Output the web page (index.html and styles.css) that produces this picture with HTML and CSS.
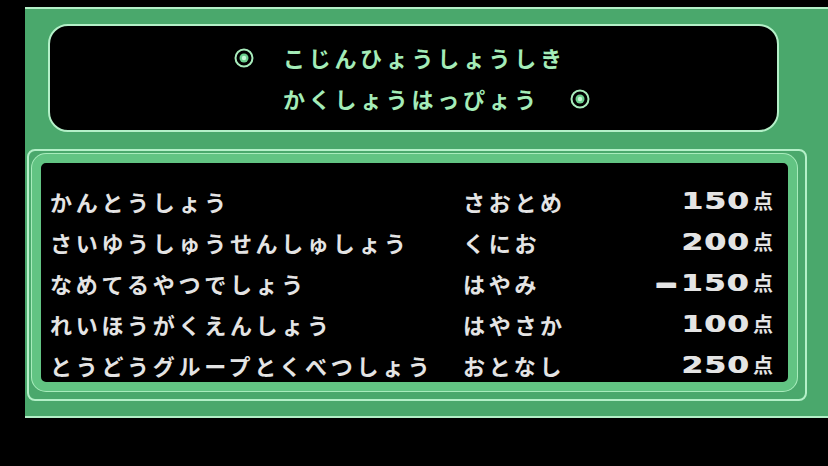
FILE: index.html
```html
<!DOCTYPE html>
<html lang="ja">
<head>
<meta charset="utf-8">
<title>こじんひょうしょうしき</title>
<link rel="stylesheet" href="styles.css">
</head>
<body>
<div class="screen">
  <div class="banner">
    <div class="banner-line first">
      <svg class="ring ring-left" viewBox="0 0 20 20" width="20" height="20"><circle cx="10" cy="10" r="8.5" fill="none" stroke="#a8ecbc" stroke-width="2"/><circle cx="10" cy="10" r="4.5" fill="#6cd08e"/><circle cx="10" cy="10" r="2.2" fill="#c8f8d8"/></svg>
      <span>こじんひょうしょうしき</span>
    </div>
    <div class="banner-line second">
      <span>かくしょうはっぴょう</span>
      <svg class="ring ring-right" viewBox="0 0 20 20" width="20" height="20"><circle cx="10" cy="10" r="8.5" fill="none" stroke="#a8ecbc" stroke-width="2"/><circle cx="10" cy="10" r="4.5" fill="#6cd08e"/><circle cx="10" cy="10" r="2.2" fill="#c8f8d8"/></svg>
    </div>
  </div>
  <div class="frame">
    <div class="board">
      <div class="row"><span class="award">かんとうしょう</span><span class="who">さおとめ</span><span class="pts"><span class="num">150</span><span class="ten">点</span></span></div>
      <div class="row"><span class="award">さいゆうしゅうせんしゅしょう</span><span class="who">くにお</span><span class="pts"><span class="num">200</span><span class="ten">点</span></span></div>
      <div class="row"><span class="award">なめてるやつでしょう</span><span class="who">はやみ</span><span class="pts"><span class="num"><span class="minus">-</span>150</span><span class="ten">点</span></span></div>
      <div class="row"><span class="award">れいほうがくえんしょう</span><span class="who">はやさか</span><span class="pts"><span class="num">100</span><span class="ten">点</span></span></div>
      <div class="row"><span class="award">とうどうグループとくべつしょう</span><span class="who">おとなし</span><span class="pts"><span class="num">250</span><span class="ten">点</span></span></div>
    </div>
  </div>
</div>
</body>
</html>
```
FILE: styles.css
```css
html, body {
  margin: 0;
  padding: 0;
}
body {
  background: #000;
  width: 828px;
  height: 466px;
  overflow: hidden;
  font-family: "Noto Sans CJK JP", "Noto Sans", sans-serif;
}
.screen {
  margin: 7px 0 0 25px;
  height: 411px;
  box-sizing: border-box;
  background: #4aa86c;
  border-top: 2px solid #b4f0c8;
  border-bottom: 2px solid #b4f0c8;
  padding-top: 15px;
  display: flex;
  flex-direction: column;
}
.banner {
  margin-left: 23px;
  width: 731px;
  height: 108px;
  box-sizing: border-box;
  border: 2px solid #b4f0c8;
  border-radius: 20px;
  background: #000;
  padding-top: 10px;
}
.banner-line {
  display: flex;
  align-items: center;
  height: 41px;
  font-size: 22px;
  font-weight: 700;
  letter-spacing: 3.7px;
  color: #a4ecb8;
}
.first {
  padding-left: 184px;
}
.second {
  padding-left: 233px;
}
.ring {
  flex: none;
  display: block;
  margin-top: 3px;
}
.ring-left {
  margin-right: 29px;
}
.ring-right {
  margin-left: 30px;
}
.frame {
  margin: 17px 0 0 2px;
  width: 780px;
  height: 252px;
  box-sizing: border-box;
  border: 2px solid #b4f0c8;
  border-radius: 8px;
  padding: 3px 8px 8px 3px;
  display: flex;
}
.board {
  flex: 1;
  border: 9px solid #62c483;
  border-radius: 14px;
  background: #000;
  padding: 17px 15px 0 9px;
  box-shadow: 0 0 0 1px #a8ecbc;
}
.row {
  display: grid;
  grid-template-columns: 413px 1fr auto;
  height: 41px;
  align-items: center;
  font-size: 22px;
  font-weight: 700;
  letter-spacing: 3.7px;
  color: #e4e4e4;
}
.pts {
  display: flex;
  align-items: baseline;
  justify-content: flex-end;
  letter-spacing: 0;
}
.num {
  display: inline-block;
  font-family: "DejaVu Sans", sans-serif;
  font-weight: 700;
  font-size: 23px;
  letter-spacing: 1px;
  transform: scaleX(1.35);
  transform-origin: right center;
  text-shadow: 0.6px 0 0 #e4e4e4;
}
.minus {
  display: inline-block;
  transform: scale(1.9, 1.6);
  margin-right: 5px;
}
.ten {
  font-size: 20px;
  font-weight: 700;
  margin-left: 3px;
}
```
